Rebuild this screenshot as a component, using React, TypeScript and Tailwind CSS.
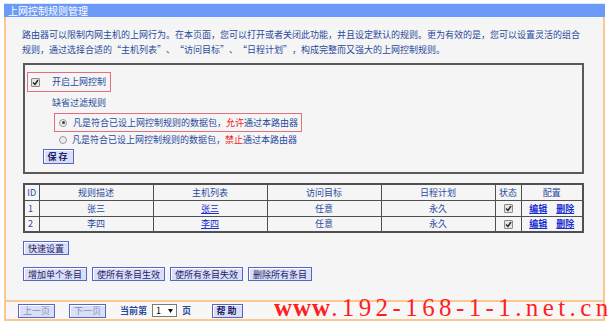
import React from 'react';

const font = { fontFamily: '"Noto Sans CJK SC", "Liberation Sans", sans-serif' };

const Btn = ({ children, w, dim }: { children: React.ReactNode; w: string; dim?: boolean }) => (
  <span
    className={`${w} h-[14px] flex items-center justify-center border border-[#5567c4] bg-[#dadff7] shadow-[inset_1px_1px_0_#ffffff] text-[9px] leading-none ${
      dim ? 'text-[#8390c4]' : 'text-[#1c2266]'
    }`}
  >
    {children}
  </span>
);

const Check = () => (
  <span className="w-[9px] h-[9px] border border-[#8a8a8a] bg-[#e4e4e4] rounded-[1px] flex items-center justify-center">
    <svg width="7" height="7" viewBox="0 0 7 7">
      <path d="M1 3.5 L3 5.5 L6 1" stroke="#222" strokeWidth="1.4" fill="none" />
    </svg>
  </span>
);

const Radio = ({ on }: { on?: boolean }) => (
  <span className="w-[8px] h-[8px] rounded-full border border-[#999] bg-[#ececec] flex items-center justify-center">
    {on && <span className="w-[3px] h-[3px] rounded-full bg-[#444]" />}
  </span>
);

const Q = ({ c }: { c: string }) => <span className="inline-block w-[9px] text-center">{c}</span>;

const rows = [
  { id: '1', name: '张三' },
  { id: '2', name: '李四' },
];

const td = 'border border-[#505050] text-center h-[16px] p-0';

export default function App() {
  return (
    <div className="w-[608px] h-[325px] bg-white relative overflow-hidden pl-[4px] pt-[3px] text-[#2a4a9c]" style={font}>
      <div className="w-[601px] flex flex-col">
        <div className="h-[14px] bg-[#6b9af8] border-t border-[#dfe8fd] text-white text-[10px] leading-[13px] pl-[4px]">
          上网控制规则管理
        </div>
        <div className="h-[283px] border-x-2 border-[#fbc790] bg-[#f5f5f5] pt-[10px]">
          <div className="pl-[16px] text-[9px] leading-[15px]">
            <p>路由器可以限制内网主机的上网行为。在本页面，您可以打开或者关闭此功能，并且设定默认的规则。更为有效的是，您可以设置灵活的组合</p>
            <p>
              规则，通过选择合适的<Q c="“" />主机列表<Q c="”" />、<Q c="“" />访问目标<Q c="”" />、<Q c="“" />日程计划
              <Q c="”" />，构成完整而又强大的上网控制规则。
            </p>
          </div>
          <div className="ml-[17px] mt-[6px] w-[561px] h-[111px] border-2 border-[#5a5a5a] pl-[2px] pt-[7px] text-[9px]">
            <div className="w-[84px] h-[20px] border border-[#e2707c] flex items-center pl-[3px]">
              <Check />
              <span className="ml-[12px]">开启上网控制</span>
            </div>
            <div className="ml-[25px] mt-[5px] leading-[12px]">缺省过滤规则</div>
            <div className="ml-[27px] mt-[4px] w-[248px] h-[19px] border border-[#e2707c] flex items-center pl-[4px]">
              <Radio on />
              <span className="ml-[6px]">
                凡是符合已设上网控制规则的数据包，<span className="text-[#f01818]">允许</span>通过本路由器
              </span>
            </div>
            <div className="ml-[32px] h-[15px] flex items-center">
              <Radio />
              <span className="ml-[5px]">
                凡是符合已设上网控制规则的数据包，<span className="text-[#f01818]">禁止</span>通过本路由器
              </span>
            </div>
            <div className="ml-[16px] mt-[2px] flex">
              <Btn w="w-[31px] h-[15px] font-bold tracking-[2px]">保存</Btn>
            </div>
          </div>
          <table className="ml-[17px] mt-[9px] w-[561px] border-collapse border-2 border-[#505050] text-[9px] leading-none">
            <tbody>
              <tr>
                <td className={`${td} w-[15px]`}>ID</td>
                <td className={`${td} w-[114px]`}>规则描述</td>
                <td className={`${td} w-[114px]`}>主机列表</td>
                <td className={`${td} w-[114px]`}>访问目标</td>
                <td className={`${td} w-[114px]`}>日程计划</td>
                <td className={`${td} w-[26px]`}>状态</td>
                <td className={td}>配置</td>
              </tr>
              {rows.map((r) => (
                <tr key={r.id}>
                  <td className={`${td} text-left pl-[3px]`}>{r.id}</td>
                  <td className={td}>{r.name}</td>
                  <td className={td}>
                    <span className="underline text-[#1a2fd0]">{r.name}</span>
                  </td>
                  <td className={td}>任意</td>
                  <td className={td}>永久</td>
                  <td className={td}>
                    <span className="inline-flex align-middle">
                      <Check />
                    </span>
                  </td>
                  <td className={td}>
                    <span className="underline text-[#1a2fd0] font-bold mr-[9px]">编辑</span>
                    <span className="underline text-[#1a2fd0] font-bold">删除</span>
                  </td>
                </tr>
              ))}
            </tbody>
          </table>
          <div className="ml-[17px] mt-[8px] flex">
            <Btn w="w-[46px]">快速设置</Btn>
          </div>
          <div className="ml-[17px] mt-[12px] flex gap-[5px]">
            <Btn w="w-[64px]">增加单个条目</Btn>
            <Btn w="w-[73px]">使所有条目生效</Btn>
            <Btn w="w-[73px]">使所有条目失效</Btn>
            <Btn w="w-[64px]">删除所有条目</Btn>
          </div>
        </div>
        <div className="h-[21px] border-2 border-[#fbc790] bg-[#f7f7f7] flex items-center pl-[12px] text-[9px]">
          <Btn w="w-[37px]" dim>
            上一页
          </Btn>
          <span className="ml-[14px]">
            <Btn w="w-[37px]" dim>
              下一页
            </Btn>
          </span>
          <span className="ml-[14px] font-bold">当前第</span>
          <span className="ml-[5px] w-[25px] h-[13px] border border-[#7a7a7a] bg-white flex items-center justify-between px-[3px] text-[9px] text-black">
            1
            <svg width="5" height="4" viewBox="0 0 5 4">
              <path d="M0 0 H5 L2.5 4 Z" fill="#111" />
            </svg>
          </span>
          <span className="ml-[5px] font-bold">页</span>
          <span className="ml-[21px]">
            <Btn w="w-[31px] font-bold tracking-[2px]">帮助</Btn>
          </span>
        </div>
      </div>
      <div
        className="absolute left-[274px] top-[294px] text-[25px] leading-[28px] text-[#ff1e1e] whitespace-nowrap"
        style={{ fontFamily: '"Liberation Serif", serif' }}
      >
        <span className="font-bold tracking-[1px]">www</span>
        <span className="tracking-[4.4px]">.192-168-1-1.net.cn</span>
      </div>
    </div>
  );
}
